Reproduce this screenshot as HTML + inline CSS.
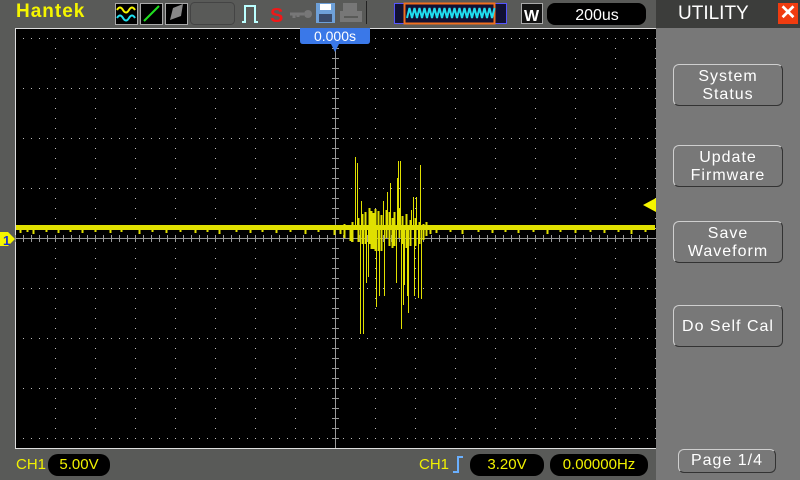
<!DOCTYPE html>
<html><head><meta charset="utf-8"><style>
*{margin:0;padding:0;box-sizing:border-box}
body{width:800px;height:480px;background:#595a58;position:relative;overflow:hidden;font-family:"Liberation Sans",sans-serif}
.a{position:absolute}
.btn{position:absolute;left:673px;width:110px;border:1px solid #cfcfcf;border-right-color:#333;border-bottom-color:#333;border-radius:6px;color:#fff;font-size:16px;text-align:center;line-height:18px;letter-spacing:1px}
.pill{position:absolute;background:#000;border-radius:10px;color:#f2f200;font-size:15px;text-align:center;height:22px;line-height:22px}
</style></head><body>
<div class="a" style="left:656px;top:0;width:144px;height:480px;background:#787878"></div>
<div class="a" style="left:656px;top:0;width:144px;height:28px;background:#3c3d3b"></div>
<div class="a" style="left:678px;top:3px;color:#fff;font-size:19px">UTILITY</div>
<div class="a" style="left:778px;top:3px;width:20px;height:21px;background:#f03c10;color:#fff;font-size:20px;line-height:21px;text-align:center;font-weight:bold">✕</div>
<div class="btn" style="top:64px;height:42px;padding-top:3px">System<br>Status</div>
<div class="btn" style="top:145px;height:42px;padding-top:3px">Update<br>Firmware</div>
<div class="btn" style="top:221px;height:42px;padding-top:3px">Save<br>Waveform</div>
<div class="btn" style="top:305px;height:42px;line-height:42px">Do Self Cal</div>
<div class="btn" style="top:449px;height:24px;line-height:22px;left:678px;width:98px">Page 1/4</div>

<div class="a" style="left:16px;top:1px;color:#f5f500;font-size:19px;font-weight:bold;letter-spacing:1px">Hantek</div>
<svg class="a" style="left:0;top:0" width="656" height="29">
<rect x="115.5" y="3.5" width="22" height="21" fill="#000" stroke="#aaa"/>
<path d="M117 10 q3-5 6 0 t6 0 t6 0" stroke="#f5f500" stroke-width="2" fill="none"/>
<path d="M117 18 q3-5 6 0 t6 0 t6 0" stroke="#20e0f0" stroke-width="2" fill="none"/>
<rect x="140.5" y="3.5" width="22" height="21" fill="#000" stroke="#aaa"/>
<path d="M144 21 L159 6" stroke="#20e020" stroke-width="2"/>
<rect x="165.5" y="3.5" width="22" height="21" fill="#000" stroke="#aaa"/>
<path d="M170 20 l3-12 l10-4 l-2 12z" fill="#888"/>
<rect x="190.5" y="2.5" width="44" height="22" rx="4" fill="none" stroke="#444"/>
<path d="M242 22 h3 v-16 h10 v16 h3" stroke="#bff" stroke-width="2" fill="none"/>
<text x="270" y="22" fill="#f01818" font-size="20" font-weight="bold" font-family="Liberation Sans">S</text>
<path d="M290 14 h14 M294 14 v4 M298 14 v3" stroke="#777" stroke-width="3"/><circle cx="308" cy="14" r="4" fill="#777"/>
<rect x="316" y="3" width="19" height="20" fill="#6ea0d8"/><rect x="320" y="4" width="11" height="6" fill="#fff"/><rect x="319" y="14" width="13" height="8" fill="#3a4b6b"/>
<rect x="343" y="3" width="14" height="8" fill="#777"/><rect x="340" y="11" width="22" height="11" fill="#777"/><rect x="344" y="16" width="14" height="2" fill="#595a58"/>
<line x1="366.5" y1="1" x2="366.5" y2="24" stroke="#222"/>
<rect x="394.5" y="3.5" width="112" height="20" fill="#113" stroke="#55f"/>
<rect x="404.5" y="3.5" width="90" height="20" fill="#113" stroke="#f07020" stroke-width="2"/>
<path d="M407 18 l2.5-10 l2.5 10 l2.5-10 l2.5 10 l2.5-10 l2.5 10 l2.5-10 l2.5 10 l2.5-10 l2.5 10 l2.5-10 l2.5 10 l2.5-10 l2.5 10 l2.5-10 l2.5 10 l2.5-10 l2.5 10 l2.5-10 l2.5 10 l2.5-10 l2.5 10 l2.5-10 l2.5 10 l2.5-10 l2.5 10 l2.5-10 l2.5 10 l2.5-10 l2.5 10 l2.5-10 l2.5 10 l2.5-10 l2.5 10 l2.5-10" stroke="#20e0f0" stroke-width="2" fill="none"/>
<rect x="521.5" y="3.5" width="21" height="20" fill="#111" stroke="#aaa"/>
<text x="524" y="21" fill="#fff" font-size="16" font-weight="bold" font-family="Liberation Sans">W</text>
<rect x="547" y="3" width="99" height="22" rx="8" fill="#000"/>
<text x="597" y="20" fill="#fff" font-size="16" text-anchor="middle" font-family="Liberation Sans">200us</text>
</svg>

<svg class="a" style="left:0;top:0" width="656" height="480" shape-rendering="crispEdges">
<defs>
<pattern id="hr" x="15" y="0" width="8" height="480" patternUnits="userSpaceOnUse"><rect x="0" y="38" width="1" height="1" fill="#bbb"/><rect x="0" y="88" width="1" height="1" fill="#bbb"/><rect x="0" y="138" width="1" height="1" fill="#bbb"/><rect x="0" y="188" width="1" height="1" fill="#bbb"/><rect x="0" y="288" width="1" height="1" fill="#bbb"/><rect x="0" y="338" width="1" height="1" fill="#bbb"/><rect x="0" y="388" width="1" height="1" fill="#bbb"/><rect x="0" y="438" width="1" height="1" fill="#bbb"/></pattern>
<pattern id="vc" x="15" y="28" width="40" height="10" patternUnits="userSpaceOnUse"><rect x="0" y="0" width="1" height="1" fill="#bbb"/></pattern>
</defs>
<rect x="15" y="28" width="641" height="421" fill="#000"/>
<rect x="15" y="28" width="641" height="421" fill="url(#hr)"/>
<rect x="15" y="28" width="641" height="421" fill="url(#vc)"/>
<line x1="15.5" y1="28" x2="15.5" y2="449" stroke="#ddd"/>
<line x1="15" y1="28.5" x2="656" y2="28.5" stroke="#ddd"/>
<line x1="15" y1="448.5" x2="656" y2="448.5" stroke="#ddd"/>
<line x1="335.5" y1="29" x2="335.5" y2="448" stroke="#999"/>
<line x1="16" y1="238.5" x2="655" y2="238.5" stroke="#999"/>
<path d="M 15.5 235 v7 M23.5 235 v7 M31.5 235 v7 M39.5 235 v7 M47.5 235 v7 M55.5 235 v7 M63.5 235 v7 M71.5 235 v7 M79.5 235 v7 M87.5 235 v7 M95.5 235 v7 M103.5 235 v7 M111.5 235 v7 M119.5 235 v7 M127.5 235 v7 M135.5 235 v7 M143.5 235 v7 M151.5 235 v7 M159.5 235 v7 M167.5 235 v7 M175.5 235 v7 M183.5 235 v7 M191.5 235 v7 M199.5 235 v7 M207.5 235 v7 M215.5 235 v7 M223.5 235 v7 M231.5 235 v7 M239.5 235 v7 M247.5 235 v7 M255.5 235 v7 M263.5 235 v7 M271.5 235 v7 M279.5 235 v7 M287.5 235 v7 M295.5 235 v7 M303.5 235 v7 M311.5 235 v7 M319.5 235 v7 M327.5 235 v7 M343.5 235 v7 M351.5 235 v7 M359.5 235 v7 M367.5 235 v7 M375.5 235 v7 M383.5 235 v7 M391.5 235 v7 M399.5 235 v7 M407.5 235 v7 M415.5 235 v7 M423.5 235 v7 M431.5 235 v7 M439.5 235 v7 M447.5 235 v7 M455.5 235 v7 M463.5 235 v7 M471.5 235 v7 M479.5 235 v7 M487.5 235 v7 M495.5 235 v7 M503.5 235 v7 M511.5 235 v7 M519.5 235 v7 M527.5 235 v7 M535.5 235 v7 M543.5 235 v7 M551.5 235 v7 M559.5 235 v7 M567.5 235 v7 M575.5 235 v7 M583.5 235 v7 M591.5 235 v7 M599.5 235 v7 M607.5 235 v7 M615.5 235 v7 M623.5 235 v7 M631.5 235 v7 M639.5 235 v7 M647.5 235 v7" stroke="#999"/>
<path d="M332 48.5h7M332 58.5h7M332 68.5h7M332 78.5h7M332 88.5h7M332 98.5h7M332 108.5h7M332 118.5h7M332 128.5h7M332 138.5h7M332 148.5h7M332 158.5h7M332 168.5h7M332 178.5h7M332 188.5h7M332 198.5h7M332 208.5h7M332 218.5h7M332 228.5h7M332 248.5h7M332 258.5h7M332 268.5h7M332 278.5h7M332 288.5h7M332 298.5h7M332 308.5h7M332 318.5h7M332 328.5h7M332 338.5h7M332 348.5h7M332 358.5h7M332 368.5h7M332 378.5h7M332 388.5h7M332 398.5h7M332 408.5h7M332 418.5h7M332 428.5h7M332 438.5h7" stroke="#999"/>
<rect x="16" y="225" width="639" height="5" fill="#e0e000"/>
<path d="M20.5 230v3M27.5 230v2M33.5 230v4M46.5 230v2M58.5 230v3M70.5 230v2M82.5 230v3M95.5 230v2M110.5 230v3M121.5 230v2M139.5 230v4M152.5 230v2M166.5 230v3M180.5 230v2M195.5 230v3M207.5 230v2M219.5 230v4M236.5 230v2M250.5 230v3M262.5 230v2M276.5 230v3M290.5 230v2M305.5 230v4M318.5 230v2M334.5 230v5M436.5 230v3M450.5 230v2M462.5 230v4M478.5 230v2M492.5 230v3M505.5 230v2M518.5 230v3M533.5 230v2M547.5 230v4M560.5 230v2M575.5 230v3M590.5 230v2M604.5 230v3M618.5 230v2M631.5 230v4M645.5 230v2" stroke="#e0e000" stroke-width="2"/>
<path d="M355.5 230V157M357.5 230V163M361.5 230V201M383.5 230V201M387.5 230V192M390.5 230V183M397.5 230V178M398.5 230V161M400.5 230V161M411.5 230V210M413.5 230V197M416.5 230V197M420.5 230V165M360.5 230V334M363.5 230V334M366.5 230V283M368.5 230V277M376.5 230V307M379.5 230V296M384.5 230V296M396.5 230V283M401.5 230V329M403.5 230V305M404.5 230V285M407.5 230V296M408.5 230V313M418.5 230V298M421.5 230V299M414.5 230V296" stroke="#e0e000" stroke-width="1"/>
<path d="M350.5 226v15M352.5 222v20M358.5 218v24M362.5 214v30M365.5 212v32M369.5 208v36M371.5 211v38M373.5 213v36M375.5 209v42M378.5 211v40M381.5 215v36M386.5 210v28M389.5 212v34M392.5 218v30M394.5 212v34M399.5 208v30M402.5 216v28M406.5 214v34M410.5 220v26M415.5 218v28M419.5 222v22M423.5 224v16M426.5 222v14M430.5 226v8M344.5 224v14M340.5 226v8" stroke="#e0e000" stroke-width="2"/>
<path d="M300 28h70v13q0 3-3 3h-28l-4 8l-4-8h-28q-3 0-3-3z" fill="#3a78e8" shape-rendering="auto"/>
<path d="M643 205l13-7v14z" fill="#f5f500" shape-rendering="auto"/>
<path d="M0 232h8l7 7l-7 7h-8z" fill="#f5f500" shape-rendering="auto"/>
<text x="3" y="245" fill="#1a2fd0" font-size="13" font-weight="bold" font-family="Liberation Sans">1</text>
</svg>
<div class="a" style="left:300px;top:28px;width:70px;text-align:center;color:#fff;font-size:14px;line-height:16px">0.000s</div>

<div class="a" style="left:16px;top:456px;color:#f2f200;font-size:15px">CH1</div>
<div class="pill" style="left:48px;top:454px;width:62px">5.00V</div>
<div class="a" style="left:419px;top:456px;color:#f2f200;font-size:15px">CH1</div>
<svg class="a" style="left:452px;top:454px" width="16" height="20"><path d="M1 18h5V3h5" stroke="#6ab0ff" stroke-width="2" fill="none"/></svg>
<div class="pill" style="left:470px;top:454px;width:74px">3.20V</div>
<div class="pill" style="left:550px;top:454px;width:98px">0.00000Hz</div>
</body></html>
